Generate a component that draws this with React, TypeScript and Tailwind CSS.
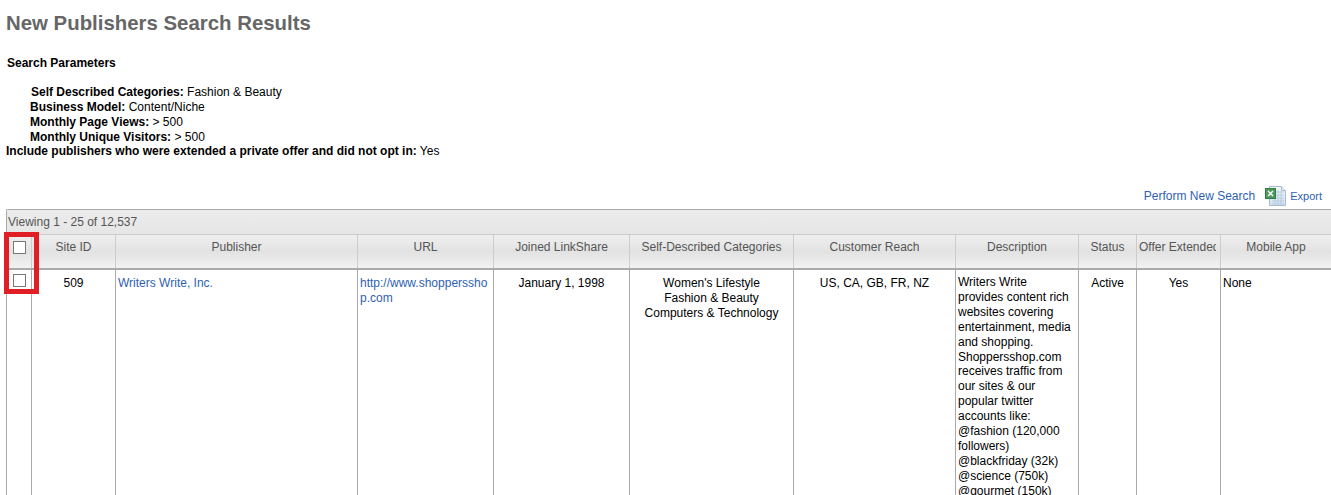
const columns = [
  { title: "", width: "w-[25px]" },
  { title: "Site ID", width: "w-[84px]" },
  { title: "Publisher", width: "w-[242px]" },
  { title: "URL", width: "w-[136px]" },
  { title: "Joined LinkShare", width: "w-[136px]" },
  { title: "Self-Described Categories", width: "w-[164px]" },
  { title: "Customer Reach", width: "w-[162px]" },
  { title: "Description", width: "w-[123px]" },
  { title: "Status", width: "w-[58px]" },
  { title: "Offer Extended", width: "w-[84px] pr-[4px]" },
  { title: "Mobile App", width: "w-[111px]" },
];

const params = [
  ["Self Described Categories:", "Fashion & Beauty"],
  ["Business Model:", "Content/Niche"],
  ["Monthly Page Views:", "> 500"],
  ["Monthly Unique Visitors:", "> 500"],
];

const description = [
  "Writers Write",
  "provides content rich",
  "websites covering",
  "entertainment, media",
  "and shopping.",
  "Shoppersshop.com",
  "receives traffic from",
  "our sites & our",
  "popular twitter",
  "accounts like:",
  "@fashion (120,000",
  "followers)",
  "@blackfriday (32k)",
  "@science (750k)",
  "@gourmet (150k)",
];

function Checkbox() {
  return <div className="w-[13px] h-[13px] border border-[#777] bg-white" />;
}

function ExcelIcon() {
  return (
    <svg width="22" height="22" viewBox="0 0 22 22" className="block">
      <defs>
        <linearGradient id="page" x1="0" y1="0" x2="0" y2="1">
          <stop offset="0" stopColor="#f6f8fb" />
          <stop offset="1" stopColor="#cfdff0" />
        </linearGradient>
      </defs>
      <path d="M4.5 1.5h12l4 4v15h-16z" fill="url(#page)" stroke="#a9bccf" />
      <path d="M16.5 1.5v4h4" fill="#e6edf5" stroke="#a9bccf" />
      <path d="M11 7h8M11 10h8M7 13h12M7 16h12M7 19h12M10 13v6M13 5v14M16 6v13" stroke="#b3c6da" strokeWidth="0.8" />
      <rect x="0.5" y="3.5" width="10" height="10" fill="#4d9a5c" stroke="#2f7d43" />
      <path d="M3 6l5 5M8 6l-5 5" stroke="#fff" strokeWidth="1.4" />
    </svg>
  );
}

export default function App() {
  return (
    <div className="h-[495px] overflow-hidden bg-white text-black font-['Liberation_Sans',Arial,sans-serif] text-[12px] leading-[15px]">
      <h1 className="pl-[6px] pt-[12px] text-[20.4px] leading-[22px] font-bold text-[#666]">New Publishers Search Results</h1>

      <div className="pl-[7px] mt-[22px] font-bold">Search Parameters</div>

      <div className="pl-[30px] mt-[14px]">
        {params.map(([label, value], i) => (
          <div key={label} className={i === 0 ? "pl-[1px]" : ""}>
            <b>{label}</b> {value}
          </div>
        ))}
      </div>
      <div className="pl-[6px] mt-[-1px]">
        <b>Include publishers who were extended a private offer and did not opt in:</b> Yes
      </div>

      <div className="flex justify-end items-center h-[24px] mt-[25px] pr-[9px] text-[#2f5fb3]">
        <span className="relative left-[-1px]">Perform New Search</span>
        <span className="ml-[9px] mr-[3px]"><ExcelIcon /></span>
        <span className="text-[11px]">Export</span>
      </div>

      <div className="ml-[6px] mt-[1px] border-l border-t border-[#aaa] rounded-tl-[2px]">
        <div className="h-[25px] pl-[1px] flex items-center text-[#555] bg-gradient-to-b from-[#ececec] to-[#e6e6e6] border-b border-[#ccc]">
          Viewing 1 - 25 of 12,537
        </div>
        <div className="flex h-[35px] border-b-2 border-[#aaa] bg-gradient-to-b from-[#f0f0f0] via-[#e2e2e2] to-[#f2f2f2] text-[#555]">
          {columns.map((col, i) => (
            <div key={i} className={`${col.width} shrink-0 border-r border-[#ccc] px-[2px] pt-[5px] whitespace-nowrap`}>
              {i === 0 ? (
                <div className="flex justify-center pt-[1px]"><Checkbox /></div>
              ) : (
                <div className="text-center overflow-hidden">{col.title}</div>
              )}
            </div>
          ))}
        </div>
        <div className="flex h-[300px]">
          <div className="w-[25px] shrink-0 border-r border-[#aaa] pt-[4px] flex justify-center items-start"><Checkbox /></div>
          <div className="w-[84px] shrink-0 border-r border-[#aaa] pt-[6px] text-center">509</div>
          <div className="w-[242px] shrink-0 border-r border-[#aaa] pt-[6px] pl-[2px] text-[#2f5fb3]">Writers Write, Inc.</div>
          <div className="w-[136px] shrink-0 border-r border-[#aaa] pt-[6px] pl-[2px] text-[#2f5fb3] break-all">http://www.shoppersshop.com</div>
          <div className="w-[136px] shrink-0 border-r border-[#aaa] pt-[6px] text-center">January 1, 1998</div>
          <div className="w-[164px] shrink-0 border-r border-[#aaa] pt-[6px] text-center">
            <div>Women's Lifestyle</div>
            <div>Fashion & Beauty</div>
            <div>Computers & Technology</div>
          </div>
          <div className="w-[162px] shrink-0 border-r border-[#aaa] pt-[6px] text-center">US, CA, GB, FR, NZ</div>
          <div className="w-[123px] shrink-0 border-r border-[#aaa] pt-[5px] pl-[2px] leading-[14.9px]">
            {description.map((line) => (
              <div key={line}>{line}</div>
            ))}
          </div>
          <div className="w-[58px] shrink-0 border-r border-[#aaa] pt-[6px] text-center">Active</div>
          <div className="w-[84px] shrink-0 border-r border-[#aaa] pt-[6px] text-center">Yes</div>
          <div className="w-[111px] shrink-0 pt-[6px] pl-[2px]">None</div>
        </div>
      </div>

      {/* red highlight drawn over the select column */}
      <div className="absolute left-[4px] top-[232px] w-[35px] h-[62px] border-[5px] border-[#e01e26]" />
    </div>
  );
}
